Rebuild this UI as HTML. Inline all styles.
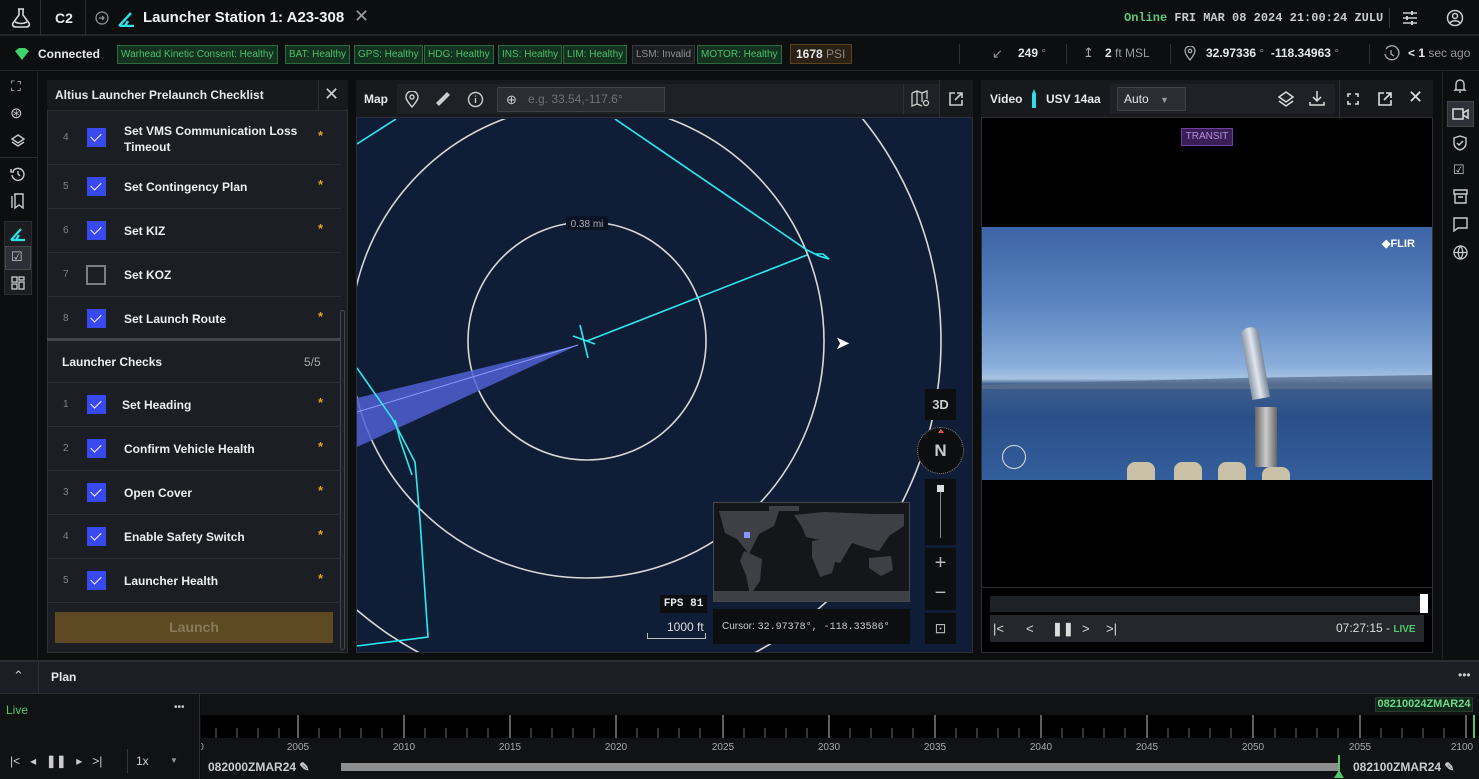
<!DOCTYPE html>
<html><head><meta charset="utf-8"><style>
*{box-sizing:border-box;margin:0;padding:0}
body{width:1479px;height:779px;background:#0d0e10;font-family:"Liberation Sans",sans-serif;color:#e6e8eb;position:relative;overflow:hidden;font-size:12px}
.a{position:absolute}
.mono{font-family:"Liberation Mono",monospace}
.tag{position:absolute;top:45px;height:19px;border:1px solid #2f6a3e;background:#143220;color:#4fbf6a;font-size:10px;line-height:17px;padding:0 3px;white-space:nowrap}
.row{position:absolute;left:0;width:294px;height:44px;border-bottom:1px solid #2b2f35}
.row .n{position:absolute;left:16px;top:0;line-height:44px;color:#80858c;font-size:10px}
.row .cb{position:absolute;left:40px;top:12px;width:19px;height:19px;background:#3949f0}
.row .cb:after{content:"";position:absolute;left:6px;top:3px;width:5px;height:9px;border:solid #fff;border-width:0 1.5px 1.5px 0;transform:rotate(45deg)}
.row .t{position:absolute;left:77px;top:0;line-height:44px;font-size:12px;font-weight:bold;color:#eceef0}
.row .s{position:absolute;left:271px;top:0;line-height:40px;color:#e0a12a;font-size:13px;font-weight:bold}
.ic{position:absolute;color:#c8cbd0}
</style></head><body>
<!-- top bar -->
<div class="a" style="left:0;top:0;width:1479px;height:36px;background:#0d0e10;border-bottom:2px solid #23262b"></div>
<svg class="a" style="left:10px;top:7px" width="22" height="22" viewBox="0 0 22 22" fill="none" stroke="#d6d8db" stroke-width="1.6"><path d="M8 2h6M9 2v6L3 16c-1 2 0 4 3 4h10c3 0 4-2 3-4L13 8V2"/><path d="M5 15c4 2 8 2 12 0"/></svg>
<div class="a" style="left:40px;top:0;width:1px;height:36px;background:#2a2d31"></div>
<div class="a" style="left:55px;top:10px;font-size:14px;font-weight:bold">C2</div>
<div class="a" style="left:85px;top:0;width:1px;height:36px;background:#2a2d31"></div>
<svg class="a" style="left:95px;top:11px" width="14" height="14" viewBox="0 0 14 14" fill="none" stroke="#999" stroke-width="1.2"><circle cx="7" cy="7" r="6"/><path d="M4 7h5M7 5l2 2-2 2"/></svg>
<svg class="a" style="left:117px;top:10px" width="20" height="17" viewBox="0 0 20 17" fill="none" stroke="#2fe0e8" stroke-width="2.4"><path d="M2 16L14 3M8 16l3-5M3 16h14"/></svg>
<div class="a" style="left:143px;top:9px;font-size:15px;font-weight:bold;color:#f0f1f3">Launcher Station 1: A23-308</div>
<div class="a" style="left:354px;top:6px;font-size:18px;color:#9a9da2">✕</div>
<div class="a mono" style="left:1124px;top:11px;font-size:12px;color:#c8cbcf;font-weight:bold"><span style="color:#5fc87a">Online</span> FRI MAR 08 2024 21:00:24 ZULU</div>
<div class="a" style="left:1389px;top:8px;width:1px;height:20px;background:#33363b"></div>
<svg class="a" style="left:1402px;top:10px" width="16" height="16" viewBox="0 0 16 16" stroke="#ccc" stroke-width="1.5"><path d="M1 3h14M1 8h14M1 13h14"/><path d="M10 1v4M5 6v4M10 11v4" stroke-width="2"/></svg>
<svg class="a" style="left:1446px;top:9px" width="18" height="18" viewBox="0 0 18 18" fill="none" stroke="#ccc" stroke-width="1.5"><circle cx="9" cy="9" r="7.5"/><circle cx="9" cy="7" r="2.5"/><path d="M4 14c2-3 8-3 10 0"/></svg>
<!-- status bar -->
<svg class="a" style="left:14px;top:47px" width="16" height="14" viewBox="0 0 16 14"><path d="M1 4l4-3h6l4 3-7 9z" fill="#3fd46a"/></svg>
<div class="a" style="left:38px;top:47px;font-size:12px;font-weight:bold">Connected</div>
<div class="tag" style="left:117px">Warhead Kinetic Consent: Healthy</div>
<div class="tag" style="left:285px">BAT: Healthy</div>
<div class="tag" style="left:354px">GPS: Healthy</div>
<div class="tag" style="left:424px">HDG: Healthy</div>
<div class="tag" style="left:498px">INS: Healthy</div>
<div class="tag" style="left:563px">LIM: Healthy</div>
<div class="tag" style="left:632px;background:#1c1e22;border-color:#35383d;color:#8e9196">LSM: Invalid</div>
<div class="tag" style="left:697px">MOTOR: Healthy</div>
<div class="a" style="left:790px;top:44px;width:62px;height:20px;border:1px solid #5a4220;background:#2a2114;font-size:12px;line-height:18px;padding-left:5px;font-weight:bold">1678 <span style="color:#888;font-weight:normal">PSI</span></div>
<div class="a" style="left:0;top:70px;width:1479px;height:1px;background:#23262b"></div>
<div class="a" style="left:959px;top:44px;width:1px;height:20px;background:#2d3035"></div>
<div class="a" style="left:992px;top:46px;font-size:13px;color:#999">↙</div>
<div class="a" style="left:1018px;top:46px;font-size:12px;font-weight:bold">249 <span style="color:#888;font-weight:normal">°</span></div>
<div class="a" style="left:1066px;top:44px;width:1px;height:20px;background:#2d3035"></div>
<div class="a" style="left:1083px;top:45px;font-size:13px;color:#aaa">↥</div>
<div class="a" style="left:1105px;top:46px;font-size:12px;font-weight:bold">2 <span style="color:#999;font-weight:normal">ft MSL</span></div>
<div class="a" style="left:1170px;top:44px;width:1px;height:20px;background:#2d3035"></div>
<svg class="a" style="left:1184px;top:46px" width="12" height="15" viewBox="0 0 12 15" fill="none" stroke="#aaa" stroke-width="1.3"><path d="M6 14C2 9 1 7 1 5a5 5 0 0110 0c0 2-1 4-5 9z"/><circle cx="6" cy="5" r="1.7"/></svg>
<div class="a" style="left:1206px;top:46px;font-size:12px;font-weight:bold">32.97336 <span style="color:#888;font-weight:normal">°</span>&nbsp; -118.34963 <span style="color:#888;font-weight:normal">°</span></div>
<div class="a" style="left:1369px;top:44px;width:1px;height:20px;background:#2d3035"></div>
<svg class="a" style="left:1383px;top:45px" width="17" height="17" viewBox="0 0 17 17" fill="none" stroke="#aaa" stroke-width="1.3"><path d="M3 4a7 7 0 11-1 5"/><path d="M8 5v4l3 2"/></svg>
<div class="a" style="left:1408px;top:46px;font-size:12px;font-weight:bold">&lt; 1 <span style="color:#999;font-weight:normal">sec ago</span></div>
<!-- left rail -->
<div class="a" style="left:37px;top:71px;width:1px;height:588px;background:#202327"></div>
<div class="ic" style="left:11px;top:78px;font-size:14px">⛶</div>
<div class="ic" style="left:10px;top:104px;font-size:15px">⊛</div>
<svg class="a" style="left:10px;top:133px" width="16" height="16" viewBox="0 0 16 16" fill="none" stroke="#ccc" stroke-width="1.4"><path d="M8 2l6 4-6 4-6-4zM2 9l6 4 6-4"/></svg>
<div class="a" style="left:0;top:157px;width:37px;height:1px;background:#2a2d31"></div>
<svg class="a" style="left:10px;top:166px" width="16" height="16" viewBox="0 0 16 16" fill="none" stroke="#ccc" stroke-width="1.4"><path d="M3 5a6 6 0 11-1 4"/><path d="M1 3v3h3M8 5v3l2 2"/></svg>
<svg class="a" style="left:11px;top:193px" width="14" height="16" viewBox="0 0 14 16" fill="none" stroke="#ccc" stroke-width="1.4"><path d="M3 1h9v14l-4-3-4 3V1M1 3v12"/></svg>
<div class="a" style="left:4px;top:221px;width:28px;height:74px;background:#1b1d21;border:1px solid #2a2d31"></div>
<svg class="a" style="left:9px;top:226px" width="18" height="16" viewBox="0 0 18 16" fill="none" stroke="#2fe0e8" stroke-width="2.2"><path d="M2 14L12 3M7 14l3-5M2 14h14"/></svg>
<div class="a" style="left:5px;top:246px;width:26px;height:24px;background:#2d3036;border:1px solid #44474c"></div>
<div class="ic" style="left:11px;top:249px;font-size:13px">☑</div>
<svg class="a" style="left:11px;top:276px" width="14" height="14" viewBox="0 0 14 14" fill="none" stroke="#ccc" stroke-width="1.3"><rect x="1" y="1" width="5" height="5"/><rect x="8" y="1" width="5" height="3"/><rect x="1" y="8" width="5" height="5"/><rect x="8" y="6" width="5" height="7"/></svg>
<!-- checklist panel -->
<div class="a" style="left:47px;top:80px;width:301px;height:573px;background:#1b1e22;border:1px solid #2c2f34"></div>
<div class="a" style="left:47px;top:80px;width:301px;height:31px;background:#17191c;border-bottom:1px solid #2c2f34"></div>
<div class="a" style="left:55px;top:88px;font-size:12px;font-weight:bold">Altius Launcher Prelaunch Checklist</div>
<div class="a" style="left:318px;top:80px;width:1px;height:31px;background:#2c2f34"></div>
<div class="a" style="left:324px;top:84px;font-size:18px;color:#ccc">✕</div>
<div class="a" style="left:340px;top:310px;width:5px;height:340px;border:1px solid #44474c;border-radius:3px"></div>
<div class="a" style="left:47px;top:111px;width:294px;height:540px">
 <div class="row" style="top:0;height:54px"><span class="n" style="line-height:54px">4</span><span class="cb" style="top:17px"></span><span class="t" style="line-height:16px;top:12px">Set VMS Communication Loss<br>Timeout</span><span class="s" style="line-height:50px">*</span></div>
 <div class="row" style="top:54px"><span class="n">5</span><span class="cb"></span><span class="t">Set Contingency Plan</span><span class="s">*</span></div>
 <div class="row" style="top:98px"><span class="n">6</span><span class="cb"></span><span class="t">Set KIZ</span><span class="s">*</span></div>
 <div class="row" style="top:142px"><span class="n">7</span><span style="position:absolute;left:39px;top:12px;width:20px;height:20px;border:2px solid #7a7d82"></span><span class="t">Set KOZ</span></div>
 <div class="row" style="top:186px;border-bottom:3px solid #44474c"><span class="n">8</span><span class="cb"></span><span class="t">Set Launch Route</span><span class="s">*</span></div>
 <div class="row" style="top:233px;height:39px"><span class="t" style="left:15px;line-height:36px">Launcher Checks</span><span style="position:absolute;left:257px;top:11px;color:#aaa;font-size:12px">5/5</span></div>
 <div class="row" style="top:272px"><span class="n">1</span><span class="cb"></span><span class="t" style="left:75px">Set Heading</span><span class="s">*</span></div>
 <div class="row" style="top:316px"><span class="n">2</span><span class="cb"></span><span class="t">Confirm Vehicle Health</span><span class="s">*</span></div>
 <div class="row" style="top:360px"><span class="n">3</span><span class="cb"></span><span class="t">Open Cover</span><span class="s">*</span></div>
 <div class="row" style="top:404px"><span class="n">4</span><span class="cb"></span><span class="t">Enable Safety Switch</span><span class="s">*</span></div>
 <div class="row" style="top:448px"><span class="n">5</span><span class="cb"></span><span class="t">Launcher Health</span><span class="s">*</span></div>
</div>
<div class="a" style="left:55px;top:612px;width:278px;height:31px;background:#5e4a22;color:#8a7a5c;font-size:14px;font-weight:bold;text-align:center;line-height:31px">Launch</div>
<!-- map panel -->
<div class="a" style="left:356px;top:80px;width:617px;height:573px;background:#0f1e36;border:1px solid #2c2f34"></div>
<div class="a" style="left:356px;top:80px;width:617px;height:38px;background:#17191c;border-bottom:1px solid #2c2f34"></div>
<div class="a" style="left:364px;top:92px;font-size:12px;font-weight:bold">Map</div>
<div class="a" style="left:397px;top:84px;width:542px;height:30px;background:#1e2125"></div>
<svg class="a" style="left:405px;top:91px" width="14" height="17" viewBox="0 0 14 17" fill="none" stroke="#ccc" stroke-width="1.4"><path d="M7 16C2 10 1 8 1 6a6 6 0 0112 0c0 2-1 4-6 10z"/><circle cx="7" cy="6" r="2"/></svg>
<svg class="a" style="left:434px;top:90px" width="18" height="18" viewBox="0 0 18 18"><path d="M2 13L13 2l3 3L5 16z" fill="#ccc"/></svg>
<svg class="a" style="left:467px;top:91px" width="17" height="17" viewBox="0 0 17 17" fill="none" stroke="#ccc" stroke-width="1.4"><circle cx="8.5" cy="8.5" r="7"/><path d="M8.5 7v5M8.5 4.5v1"/></svg>
<div class="a" style="left:497px;top:87px;width:168px;height:25px;background:#2a2d32;border:1px solid #3e4146"></div>
<div class="a" style="left:506px;top:92px;font-size:13px;color:#ccc">⊕</div>
<div class="a" style="left:528px;top:92px;font-size:12px;color:#6f7378">e.g. 33.54,-117.6°</div>
<div class="a" style="left:903px;top:84px;width:1px;height:30px;background:#2c2f34"></div>
<svg class="a" style="left:911px;top:90px" width="20" height="18" viewBox="0 0 20 18" fill="none" stroke="#ccc" stroke-width="1.3"><path d="M1 3l5-2 5 2 5-2v8M1 3v13l5-2 5 2M6 1v13M11 3v9"/><circle cx="15" cy="13" r="2.5"/></svg>
<div class="a" style="left:939px;top:80px;width:1px;height:38px;background:#2c2f34"></div>
<svg class="a" style="left:948px;top:91px" width="16" height="16" viewBox="0 0 16 16" fill="none" stroke="#ccc" stroke-width="1.6"><path d="M7 2H2v12h12V9M9 2h5v5M14 2L7 9"/></svg>
<svg class="a" style="left:357px;top:119px" width="615" height="533" viewBox="357 119 615 533">
 <g fill="none" stroke="#d8d8d8" stroke-width="1.6">
  <circle cx="587" cy="341" r="119"/>
  <circle cx="587" cy="341" r="237"/>
  <circle cx="587" cy="341" r="354"/>
 </g>
 <rect x="566" y="216" width="42" height="14" fill="#0b1424"/>
 <text x="587" y="227" fill="#aaa" font-size="10" text-anchor="middle" font-family="Liberation Sans">0.38 mi</text>
 <polygon points="578,345 357,398 357,447" fill="#4f5fd0" fill-opacity="0.85"/>
 <polyline points="578,345 357,412" stroke="#8c9aff" stroke-width="1" fill="none"/>
 <g fill="none" stroke="#2ee8ef" stroke-width="1.6">
  <path d="M587 341L807 255"/>
  <path d="M615 119L807 250l12 6 10 3-6-5-8 0"/>
  <path d="M357 144L396 119"/>
  <path d="M357 368L392 418 415 462 420 520 428 637 357 646"/>
  <path d="M395 420l5 20 12 35"/>
  <path d="M580 325l8 33M573 336l22 8"/>
 </g>
</svg>
<div class="a" style="left:835px;top:333px;font-size:18px;color:#fff">➤</div>
<div class="a" style="left:925px;top:389px;width:31px;height:31px;background:#0d0e10;color:#ccc;font-size:13px;font-weight:bold;text-align:center;line-height:31px">3D</div>
<div class="a" style="left:917px;top:427px;width:47px;height:47px;border-radius:50%;background:#0d0e10;border:1px dotted #888;color:#ccc;font-size:17px;font-weight:bold;text-align:center;line-height:45px">N</div>
<div class="a" style="left:938px;top:429px;width:0;height:0;border-left:3px solid transparent;border-right:3px solid transparent;border-bottom:4px solid #e54"></div>
<div class="a" style="left:925px;top:479px;width:31px;height:66px;background:#0d0e10"></div>
<div class="a" style="left:940px;top:490px;width:1px;height:48px;background:#888"></div>
<div class="a" style="left:937px;top:485px;width:7px;height:7px;background:#ddd"></div>
<div class="a" style="left:925px;top:548px;width:31px;height:62px;background:#0d0e10;color:#bbb;font-size:20px;text-align:center;line-height:30px">+<br>−</div>
<div class="a" style="left:925px;top:613px;width:31px;height:31px;background:#0d0e10;color:#bbb;font-size:14px;text-align:center;line-height:31px">⊡</div>
<div class="a" style="left:713px;top:502px;width:197px;height:100px;background:#14161a;border:1px solid #44474c;overflow:hidden">
 <svg width="197" height="100" viewBox="0 0 197 100" fill="#3d4045"><path d="M5 8h60l-5 15-15 8-10 20-12-15-12-6zM30 48l18 8-2 22-10 14-4-20-6-14zM80 12l30-3 50 2 30 0v12l-15 10-10 15-12-3-15-5-12 20-12-3-8-20-14-3-4-10z M98 38l14-2 12 12-6 22-12 4-8-20z M155 55l22-2 2 14-12 6-12-8z M0 88h197v12H0z M55 3h30v5H55z"/></svg>
 <div class="a" style="left:30px;top:29px;width:6px;height:6px;background:#8a95ff"></div>
</div>
<div class="a" style="left:713px;top:609px;width:197px;height:35px;background:#0d0e10;font-size:10px;color:#ccc;line-height:35px;padding-left:9px">Cursor: <span class="mono">32.97378°, -118.33586°</span></div>
<div class="a mono" style="left:660px;top:595px;width:47px;height:18px;background:#0d0e10;font-size:11px;font-weight:bold;line-height:18px;text-align:center">FPS 81</div>
<div class="a" style="left:667px;top:620px;font-size:12px;color:#ddd">1000 ft</div>
<div class="a" style="left:647px;top:633px;width:59px;height:6px;border:1px solid #bbb;border-top:none"></div>
<!-- video panel -->
<div class="a" style="left:981px;top:80px;width:452px;height:573px;background:#000;border:1px solid #2c2f34"></div>
<div class="a" style="left:981px;top:80px;width:452px;height:38px;background:#17191c;border-bottom:1px solid #2c2f34"></div>
<div class="a" style="left:990px;top:92px;font-size:12px;font-weight:bold">Video</div>
<svg class="a" style="left:1030px;top:89px" width="8" height="19" viewBox="0 0 8 19"><path d="M4 0l2 5v14H2V5z" fill="#2fe0e8"/></svg>
<div class="a" style="left:1046px;top:92px;font-size:12px;font-weight:bold">USV 14aa</div>
<div class="a" style="left:1110px;top:84px;width:159px;height:30px;background:#1e2125"></div>
<div class="a" style="left:1117px;top:87px;width:69px;height:24px;background:#2a2d32;border:1px solid #3e4146;font-size:12px;line-height:22px;padding-left:6px">Auto <span style="color:#999;font-size:9px;margin-left:8px">▼</span></div>
<div class="a" style="left:1269px;top:84px;width:66px;height:30px;background:#1e2125"></div>
<svg class="a" style="left:1277px;top:90px" width="18" height="18" viewBox="0 0 18 18" fill="none" stroke="#ddd" stroke-width="1.5"><path d="M9 2l7 5-7 5-7-5zM2 11l7 5 7-5"/></svg>
<svg class="a" style="left:1309px;top:90px" width="16" height="16" viewBox="0 0 16 16" fill="none" stroke="#ddd" stroke-width="1.5"><path d="M8 1v10M4 7l4 4 4-4M1 12v3h14v-3"/></svg>
<div class="a" style="left:1339px;top:80px;width:1px;height:38px;background:#2c2f34"></div>
<svg class="a" style="left:1347px;top:93px" width="12" height="12" viewBox="0 0 12 12" fill="none" stroke="#ddd" stroke-width="1.6"><path d="M1 4V1h3M8 1h3v3M11 8v3H8M4 11H1V8"/></svg>
<svg class="a" style="left:1377px;top:91px" width="16" height="16" viewBox="0 0 16 16" fill="none" stroke="#ddd" stroke-width="1.6"><path d="M7 2H2v12h12V9M9 2h5v5M14 2L7 9"/></svg>
<div class="a" style="left:1408px;top:87px;font-size:18px;color:#ddd">✕</div>
<div class="a" style="left:1181px;top:128px;width:52px;height:18px;background:#3a1f56;border:1px solid #6e3fa0;color:#b88fe0;font-size:10px;text-align:center;line-height:16px">TRANSIT</div>
<div class="a" style="left:982px;top:227px;width:450px;height:253px;background:linear-gradient(#3c64a6 0%,#5a84c0 30%,#8aaedb 55%,#a7c3e2 60%,#3e5f8e 62%,#2b4f88 75%,#335e9c 100%);overflow:hidden">
 <div class="a" style="left:0;top:148px;width:450px;height:14px;background:#5a7090;opacity:.8;clip-path:polygon(0 70%,60% 20%,100% 0,100% 100%,0 100%)"></div>
 <div class="a" style="left:264px;top:100px;width:18px;height:72px;background:linear-gradient(90deg,#8a96a8,#e0e6ee,#7a8698);transform:rotate(-10deg);border-radius:8px 8px 0 0"></div>
 <div class="a" style="left:273px;top:180px;width:22px;height:60px;background:linear-gradient(90deg,#666,#ccc,#666)"></div>
 <div class="a" style="left:145px;top:235px;width:28px;height:20px;background:#c9c0a8;border-radius:8px 8px 0 0"></div>
 <div class="a" style="left:192px;top:235px;width:28px;height:20px;background:#c9c0a8;border-radius:8px 8px 0 0"></div>
 <div class="a" style="left:236px;top:235px;width:28px;height:20px;background:#c9c0a8;border-radius:8px 8px 0 0"></div>
 <div class="a" style="left:280px;top:240px;width:28px;height:15px;background:#c9c0a8;border-radius:8px 8px 0 0"></div>
 <div class="a" style="left:20px;top:218px;width:24px;height:24px;border:1.5px solid #ddd;border-radius:50%"></div>
 <div class="a" style="left:400px;top:10px;font-size:11px;font-weight:bold;color:#fff">◆FLIR</div>
</div>
<div class="a" style="left:982px;top:587px;width:450px;height:1px;background:#2c2f34"></div>
<div class="a" style="left:990px;top:596px;width:435px;height:16px;background:#1e2125"></div>
<div class="a" style="left:1420px;top:594px;width:8px;height:19px;background:#fff"></div>
<div class="a" style="left:990px;top:615px;width:434px;height:27px;background:#24272b;color:#ddd;font-size:13px;line-height:27px">
 <span class="a" style="left:3px">|&lt;</span><span class="a" style="left:36px">&lt;</span><span class="a" style="left:62px;font-weight:bold">❚❚</span><span class="a" style="left:92px">&gt;</span><span class="a" style="left:116px">&gt;|</span>
 <span class="a" style="left:346px;font-size:12px">07:27:15 - <b style="color:#4fc86a;font-size:10px">LIVE</b></span>
</div>
<!-- right rail -->
<div class="a" style="left:1442px;top:71px;width:1px;height:588px;background:#202327"></div>
<svg class="a" style="left:1453px;top:78px" width="14" height="15" viewBox="0 0 14 15" fill="none" stroke="#ccc" stroke-width="1.4"><path d="M3 11V6a4 4 0 018 0v5l1 1H2zM6 14h2"/></svg>
<div class="a" style="left:1447px;top:101px;width:27px;height:26px;background:#2d3036;border:1px solid #44474c"></div>
<svg class="a" style="left:1452px;top:108px" width="17" height="12" viewBox="0 0 17 12" fill="none" stroke="#ddd" stroke-width="1.5"><rect x="1" y="1" width="10" height="10"/><path d="M11 5l5-3v8l-5-3"/></svg>
<svg class="a" style="left:1453px;top:135px" width="14" height="16" viewBox="0 0 14 16" fill="none" stroke="#ccc" stroke-width="1.4"><path d="M7 1l6 2v5c0 4-3 6-6 7-3-1-6-3-6-7V3z"/><path d="M4 8l2 2 4-4"/></svg>
<div class="ic" style="left:1453px;top:162px;font-size:13px">☑</div>
<svg class="a" style="left:1453px;top:189px" width="15" height="15" viewBox="0 0 15 15" fill="none" stroke="#ccc" stroke-width="1.4"><path d="M1 1h13v4H1zM2 5v9h11V5M5 8h5"/></svg>
<svg class="a" style="left:1453px;top:217px" width="15" height="15" viewBox="0 0 15 15" fill="none" stroke="#ccc" stroke-width="1.4"><path d="M1 1h13v10H5l-4 3z"/></svg>
<svg class="a" style="left:1453px;top:245px" width="15" height="15" viewBox="0 0 15 15" fill="none" stroke="#ccc" stroke-width="1.3"><circle cx="7.5" cy="7.5" r="6.5"/><path d="M1 7.5h13M7.5 1c-3 4-3 9 0 13M7.5 1c3 4 3 9 0 13"/></svg>
<!-- plan bar -->
<div class="a" style="left:0;top:660px;width:1479px;height:34px;background:#1b1e22;border-top:2px solid #2a2d31;border-bottom:1px solid #2a2d31"></div>
<div class="a" style="left:38px;top:661px;width:1px;height:33px;background:#2a2d31"></div>
<div class="a" style="left:13px;top:668px;font-size:13px;color:#ccc">⌃</div>
<div class="a" style="left:51px;top:670px;font-size:12px;font-weight:bold">Plan</div>
<div class="a" style="left:1458px;top:668px;font-size:12px;color:#ccc">•••</div>
<!-- timeline -->
<div class="a" style="left:0;top:694px;width:200px;height:85px;background:#111214;border-right:1px solid #2a2d31"></div>
<div class="a" style="left:6px;top:703px;font-size:12px;color:#4fc86a">Live</div>
<div class="a" style="left:174px;top:702px;font-size:10px;color:#ccc">•••</div>
<div class="a" style="left:10px;top:754px;font-size:12px;color:#ccc;white-space:nowrap">|&lt;&nbsp;&nbsp; ◂&nbsp;&nbsp; <b>❚❚</b>&nbsp;&nbsp; ▸&nbsp;&nbsp; &gt;|</div>
<div class="a" style="left:127px;top:749px;width:1px;height:24px;background:#33363b"></div>
<div class="a" style="left:136px;top:754px;font-size:12px;color:#ccc">1x</div>
<div class="a" style="left:170px;top:756px;font-size:8px;color:#999">▼</div>
<div class="a" style="left:201px;top:694px;width:1278px;height:85px;background:#111214"></div>
<div class="a" style="left:201px;top:715px;width:1278px;height:23px;background:#000"></div>
<svg class="a" style="left:201px;top:715px" width="1278" height="40" viewBox="201 715 1278 40">
 <g stroke="#bbb" stroke-width="1">
 <path d="M298 715v23M404 715v23M510 715v23M616 715v23M723 715v23M829 715v23M935 715v23M1041 715v23M1147 715v23M1253 715v23M1360 715v23M1466 715v23"/>
 </g>
 <path d="M1474 715v23" stroke="#4fc86a" stroke-width="2"/>
 <g fill="#aaa" font-size="10" font-family="Liberation Sans" text-anchor="middle">
 <text x="201" y="750">0</text><text x="298" y="750">2005</text><text x="404" y="750">2010</text><text x="510" y="750">2015</text><text x="616" y="750">2020</text><text x="723" y="750">2025</text><text x="829" y="750">2030</text><text x="935" y="750">2035</text><text x="1041" y="750">2040</text><text x="1147" y="750">2045</text><text x="1253" y="750">2050</text><text x="1360" y="750">2055</text><text x="1462" y="750">2100</text>
 </g>
</svg>
<svg class="a" style="left:201px;top:728px" width="1278" height="10"><g stroke="#666">
<path d="M15 0v10M36 0v10M57 0v10M78 0v10M118 0v10M139 0v10M160 0v10M181 0v10M224 0v10M245 0v10M266 0v10M287 0v10M330 0v10M351 0v10M372 0v10M393 0v10M436 0v10M457 0v10M478 0v10M499 0v10M543 0v10M564 0v10M585 0v10M606 0v10M649 0v10M670 0v10M691 0v10M712 0v10M755 0v10M776 0v10M797 0v10M818 0v10M861 0v10M882 0v10M903 0v10M924 0v10M967 0v10M988 0v10M1009 0v10M1030 0v10M1074 0v10M1095 0v10M1116 0v10M1137 0v10M1180 0v10M1201 0v10M1222 0v10M1243 0v10"/></g></svg>
<div class="a" style="left:1375px;top:697px;width:98px;height:15px;background:#0f2a18;border:1px solid #2a3a2e;color:#6fd88a;font-size:11px;font-weight:bold;text-align:center;line-height:13px">08210024ZMAR24</div>
<div class="a" style="left:208px;top:760px;font-size:12px;color:#ccc;font-weight:bold">082000ZMAR24 ✎</div>
<div class="a" style="left:341px;top:763px;width:998px;height:8px;background:#8e8e8e"></div>
<div class="a" style="left:1338px;top:755px;width:2px;height:20px;background:#4fc86a"></div>
<div class="a" style="left:1334px;top:770px;width:0;height:0;border-left:5px solid transparent;border-right:5px solid transparent;border-bottom:8px solid #4fc86a"></div>
<div class="a" style="left:1353px;top:760px;font-size:12px;color:#ccc;font-weight:bold">082100ZMAR24 ✎</div>
</body></html>
